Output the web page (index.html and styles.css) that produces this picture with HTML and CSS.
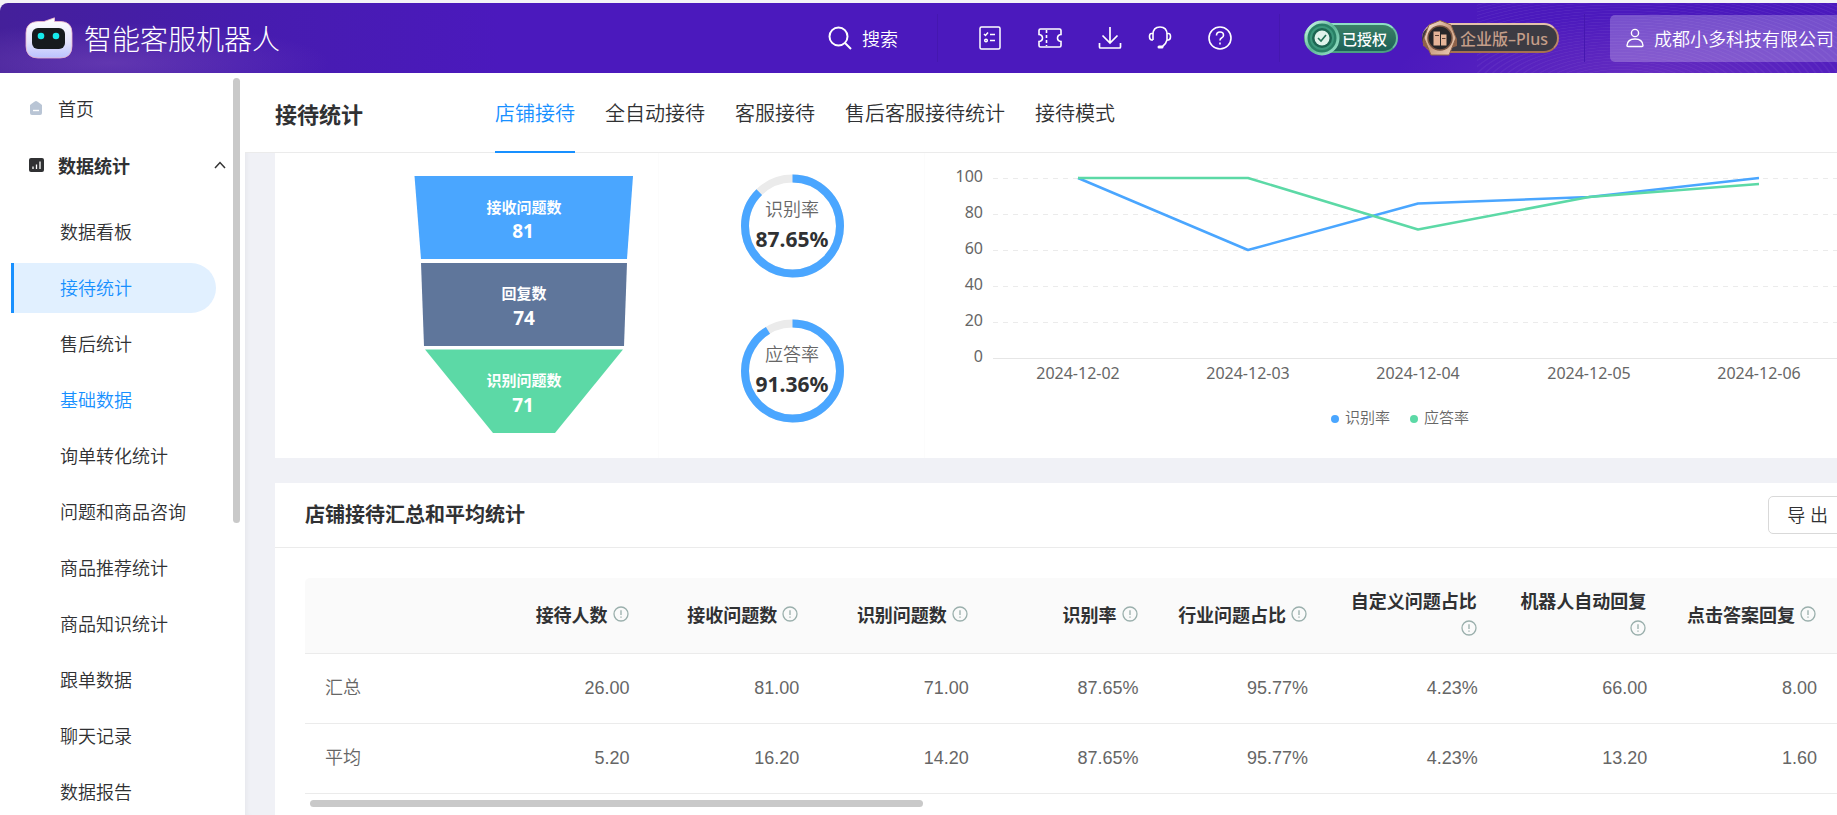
FILE: index.html
```html
<!DOCTYPE html>
<html lang="zh-CN">
<head>
  <meta charset="UTF-8">
  <title>接待统计 - 智能客服机器人</title>
  <meta name="viewport" content="width=device-width, initial-scale=1">
  <link rel="stylesheet" href="styles.css">
</head>
<body>
  <!-- shared icons -->
  <svg class="sprite" aria-hidden="true">
    <symbol id="info" viewBox="0 0 16 16">
      <circle cx="8" cy="8" r="7" fill="none" stroke="#9aafac" stroke-width="1.3"/>
      <path d="M8 4.2v4.9M8 10.6v1.2" stroke="#9aafac" stroke-width="1.3" fill="none"/>
    </symbol>
  </svg>

  <header class="topbar">
    <a class="brand" href="#">
      <svg width="48" height="42" viewBox="0 0 48 42" aria-hidden="true">
        <defs>
          <linearGradient id="face" x1="0" y1="0" x2="0" y2="1">
            <stop offset="0" stop-color="#fff"/>
            <stop offset="0.6" stop-color="#e4e3fb"/>
            <stop offset="1" stop-color="#b9c2ff"/>
          </linearGradient>
        </defs>
        <path d="M13 4.500H19L29.500 .8V4.500H36Q47 5 47 16V29Q47 41 35 41H13Q1 41 1 29V16Q1 5 13 4.500Z" fill="url(#face)" stroke="#eeb9cb" stroke-width=".8"/>
        <rect x="7" y="11" width="33" height="21" rx="6" fill="#171b1e"/>
        <circle cx="16" cy="19" r="3.300" fill="#16ecec"/>
        <circle cx="31" cy="19" r="3.300" fill="#16ecec"/>
      </svg>
      <span>智能客服机器人</span>
    </a>

    <button class="search" type="button">
      <svg width="24" height="24" viewBox="0 0 24 24" fill="none" stroke="#fff" stroke-width="2" aria-hidden="true">
        <circle cx="10.500" cy="10.500" r="9"/>
        <path d="M17 17l6 6"/>
      </svg>
      搜索
    </button>

    <nav class="tools">
      <button type="button" aria-label="任务">
        <svg width="24" height="24" viewBox="0 0 24 24" fill="none" stroke="#fff" stroke-width="1.500">
          <rect x="2" y="1" width="20" height="22" rx="1.500"/>
          <path d="M6 8l1.500 1.500L10 6.500M12 8.500h5M12 14.500h5"/>
          <circle cx="8" cy="14.500" r="1.300"/>
        </svg>
      </button>
      <button type="button" aria-label="卡券">
        <svg width="24" height="24" viewBox="0 0 24 24" fill="none" stroke="#fff" stroke-width="1.600">
          <path d="M2.500 3H21.500Q23 3 23 4.500V8.500Q19.500 9 19.500 12T23 15.500V19.500Q23 21 21.500 21H2.500Q1 21 1 19.500V15.500Q4.500 15 4.500 12T1 8.500V4.500Q1 3 2.500 3Z"/>
          <path d="M8.500 4v16" stroke-dasharray="3 2"/>
        </svg>
      </button>
      <button type="button" aria-label="下载">
        <svg width="24" height="24" viewBox="0 0 24 24" fill="none" stroke="#fff" stroke-width="1.700">
          <path d="M12 1v16M4.500 9.500L12 17l7.500-7.500M1.500 17v4q0 1 1 1h19q1 0 1-1v-4"/>
        </svg>
      </button>
      <button type="button" aria-label="客服">
        <svg width="24" height="24" viewBox="0 0 24 24" fill="none" stroke="#fff" stroke-width="1.600">
          <path d="M5 14V8.500Q5 1 12 1t7 7.500V14Q18 18 14.500 20.500"/>
          <path d="M5 7.500H3.500Q1.500 7.500 1.500 10.500T3.500 14H5M19 7.500h1.500q2 0 2 3T20.500 14H19"/>
          <path d="M11 21h3" stroke-width="3" stroke-linecap="round"/>
        </svg>
      </button>
      <button type="button" aria-label="帮助">
        <svg width="24" height="24" viewBox="0 0 24 24" fill="none" stroke="#fff" stroke-width="1.600">
          <circle cx="12" cy="12" r="11"/>
          <path d="M8.500 9.500Q8.500 6 12 6t3.500 3.200Q15.500 11 13.500 12 12 12.800 12 14.500M12 16.500v2"/>
        </svg>
      </button>
    </nav>

    <div class="badges">
      <span class="badge badge-auth">
        <svg class="medal" width="36" height="36" viewBox="0 0 36 36" aria-hidden="true">
          <defs>
            <linearGradient id="mint" x1="0" y1="0" x2="1" y2="1">
              <stop offset="0" stop-color="#d5ffee"/>
              <stop offset="0.5" stop-color="#5cb595"/>
              <stop offset="1" stop-color="#9be5cb"/>
            </linearGradient>
          </defs>
          <circle cx="18" cy="18" r="16" fill="#287f65" stroke="url(#mint)" stroke-width="3"/>
          <circle cx="18" cy="18" r="11" fill="#1c6552" stroke="#3c987c" stroke-width="2"/>
          <circle cx="18" cy="18" r="7.500" fill="#dff2eb"/>
          <path d="M14 18l3 3 5-6" fill="none" stroke="#227058" stroke-width="1.600"/>
        </svg>
        已授权
      </span>
      <span class="badge badge-plan">
        <svg class="medal" width="36" height="36" viewBox="0 0 36 36" aria-hidden="true">
          <defs>
            <linearGradient id="bronze" x1="0" y1="0" x2="1" y2="1">
              <stop offset="0" stop-color="#fff0e2"/>
              <stop offset="0.5" stop-color="#c99c7f"/>
              <stop offset="1" stop-color="#f0d3bd"/>
            </linearGradient>
          </defs>
          <path d="M10 29L1 26V19L4 14M26 29L35 26V19L32 14" fill="#8f6249"/>
          <path d="M18 0.500L29 5L34 18L27 35H9L2 18L7 5z" fill="url(#bronze)" stroke="#8f6249"/>
          <circle cx="18" cy="18" r="12" fill="#272629" stroke="#795442" stroke-width="1.500"/>
          <path d="M11.500 11.500h6.500v14h-6.500zM19 14.500h5.500v11H19z" fill="#e5b498"/>
          <path d="M13 15.500h4M20 18.500h3.500" stroke="#5d4034"/>
        </svg>
        企业版–Plus
      </span>
    </div>

    <button class="account" type="button">
      <svg width="18" height="20" viewBox="0 0 18 20" fill="none" stroke="#fff" stroke-width="1.400" aria-hidden="true">
        <circle cx="9" cy="5" r="3.600"/>
        <path d="M1 17.500Q1.500 11 9 11t8 6.500q0 1-1 1H2q-1 0-1-1z"/>
      </svg>
      成都小多科技有限公司
    </button>
  </header>

  <div class="layout">
    <aside class="sidebar">
      <a class="menu-top" href="#">
        <svg width="16" height="16" viewBox="0 0 16 16" aria-hidden="true">
          <path d="M8 1Q9 1 14 5v8q0 2-2 2H4q-2 0-2-2V5Q7 1 8 1z" fill="#b9c5d5"/>
          <path d="M5 10.500h6" stroke="#fff" stroke-width="1.400"/>
        </svg>
        首页
      </a>
      <a class="menu-top menu-open" href="#">
        <svg width="16" height="16" viewBox="0 0 16 16" aria-hidden="true">
          <rect x="1" y="1" width="15" height="14" rx="2" fill="#303133"/>
          <path d="M5 9.500V12M8.500 7.500V12M12 4.500V12" stroke="#fff" stroke-width="1.300"/>
        </svg>
        数据统计
        <svg class="arrow" width="12" height="8" viewBox="0 0 12 8" fill="none" stroke="#333" stroke-width="1.500" aria-hidden="true">
          <path d="M1 7l5-5.500L11 7"/>
        </svg>
      </a>
      <nav class="submenu">
        <a href="#">数据看板</a>
        <a class="active" href="#">接待统计</a>
        <a href="#">售后统计</a>
        <a class="hover" href="#">基础数据</a>
        <a href="#">询单转化统计</a>
        <a href="#">问题和商品咨询</a>
        <a href="#">商品推荐统计</a>
        <a href="#">商品知识统计</a>
        <a href="#">跟单数据</a>
        <a href="#">聊天记录</a>
        <a href="#">数据报告</a>
      </nav>
      <div class="side-scroll"></div>
    </aside>

    <main class="main">
      <div class="page-head">
        <h1>接待统计</h1>
        <nav class="tabs">
          <a class="active" href="#">店铺接待</a>
          <a href="#">全自动接待</a>
          <a href="#">客服接待</a>
          <a href="#">售后客服接待统计</a>
          <a href="#">接待模式</a>
        </nav>
      </div>

      <div class="content">
        <section class="card charts">
          <!-- funnel -->
          <svg class="panel" viewBox="0 0 384 305">
            <path d="M139.500 23H358L352 106H146z" fill="#4aa6ff"/>
            <path d="M146 110H352L349 193H149z" fill="#5f769b"/>
            <path d="M150 196.500H348L280 280H218z" fill="#5cd9a6"/>
            <g class="funnel-text">
              <text x="249" y="60">接收问题数</text>
              <text x="249" y="146">回复数</text>
              <text x="249" y="233">识别问题数</text>
            </g>
            <g class="funnel-num">
              <text x="248" y="85">81</text>
              <text x="249" y="172">74</text>
              <text x="248" y="259">71</text>
            </g>
          </svg>

          <!-- rates -->
          <svg class="panel" viewBox="0 0 266 305">
            <g fill="none" stroke-width="8">
              <circle cx="133.500" cy="73" r="47.500" stroke="#ebebeb"/>
              <circle cx="133.500" cy="73" r="47.500" stroke="#4aa6ff" pathLength="100" stroke-dasharray="87.65 100" transform="rotate(-90 133.500 73)"/>
              <circle cx="133.500" cy="218" r="47.500" stroke="#ebebeb"/>
              <circle cx="133.500" cy="218" r="47.500" stroke="#4aa6ff" pathLength="100" stroke-dasharray="91.36 100" transform="rotate(-90 133.500 218)"/>
            </g>
            <g class="ring-label">
              <text x="133" y="63">识别率</text>
              <text x="133" y="208">应答率</text>
            </g>
            <g class="ring-value">
              <text x="133" y="94">87.65%</text>
              <text x="133" y="239">91.36%</text>
            </g>
          </svg>

          <!-- trend -->
          <svg class="panel" viewBox="0 0 912 305">
            <path d="M68 25.500H912M68 61.500H912M68 97.500H912M68 133.500H912M68 169.500H912" stroke="#ebebeb" stroke-dasharray="5 5"/>
            <path d="M68 205.500H912" stroke="#e6e6e6"/>
            <g fill="none" stroke-width="2.500" stroke-linejoin="bevel">
              <path d="M153 25L323 97L493 50.500L664 44L834 25" stroke="#4aa6ff"/>
              <path d="M153 25H323L493 76.500L664 44L834 31" stroke="#5cd9a6"/>
            </g>
            <g class="axis-y">
              <text x="58" y="29">100</text>
              <text x="58" y="65">80</text>
              <text x="58" y="101">60</text>
              <text x="58" y="137">40</text>
              <text x="58" y="173">20</text>
              <text x="58" y="209">0</text>
            </g>
            <g class="axis-x">
              <text x="153" y="226">2024-12-02</text>
              <text x="323" y="226">2024-12-03</text>
              <text x="493" y="226">2024-12-04</text>
              <text x="664" y="226">2024-12-05</text>
              <text x="834" y="226">2024-12-06</text>
            </g>
            <circle cx="410" cy="266" r="4" fill="#4aa6ff"/>
            <circle cx="489" cy="266" r="4" fill="#5cd9a6"/>
            <g class="legend">
              <text x="420" y="270">识别率</text>
              <text x="499" y="270">应答率</text>
            </g>
          </svg>
        </section>

        <section class="card">
          <div class="card-head">
            <h2>店铺接待汇总和平均统计</h2>
            <button class="export" type="button">导 出</button>
          </div>
          <div class="table-wrap">
            <table>
              <thead>
                <tr>
                  <th></th>
                  <th>接待人数<svg class="info"><use href="#info"/></svg></th>
                  <th>接收问题数<svg class="info"><use href="#info"/></svg></th>
                  <th>识别问题数<svg class="info"><use href="#info"/></svg></th>
                  <th>识别率<svg class="info"><use href="#info"/></svg></th>
                  <th>行业问题占比<svg class="info"><use href="#info"/></svg></th>
                  <th>自定义问题占比<svg class="info"><use href="#info"/></svg></th>
                  <th>机器人自动回复<svg class="info"><use href="#info"/></svg></th>
                  <th>点击答案回复<svg class="info"><use href="#info"/></svg></th>
                </tr>
              </thead>
              <tbody>
                <tr>
                  <td>汇总</td>
                  <td>26.00</td>
                  <td>81.00</td>
                  <td>71.00</td>
                  <td>87.65%</td>
                  <td>95.77%</td>
                  <td>4.23%</td>
                  <td>66.00</td>
                  <td>8.00</td>
                </tr>
                <tr>
                  <td>平均</td>
                  <td>5.20</td>
                  <td>16.20</td>
                  <td>14.20</td>
                  <td>87.65%</td>
                  <td>95.77%</td>
                  <td>4.23%</td>
                  <td>13.20</td>
                  <td>1.60</td>
                </tr>
              </tbody>
            </table>
            <div class="table-scroll"></div>
          </div>
        </section>
      </div>
    </main>
  </div>
</body>
</html>
```
FILE: styles.css
```css
* {
  box-sizing: border-box;
}
body {
  margin: 0;
  height: 100vh;
  padding-top: 3px;
  display: flex;
  flex-direction: column;
  overflow: hidden;
  background: #f3f2f6;
  color: #303133;
  font-family: "Noto Sans", "Noto Sans CJK SC", sans-serif;
  font-size: 18px;
  font-weight: 350;
}
a {
  color: inherit;
  text-decoration: none;
}
button {
  border: none;
  background: none;
  padding: 0;
  color: inherit;
  font: inherit;
  white-space: nowrap;
  cursor: pointer;
}
h1, h2 {
  margin: 0;
}
svg {
  flex: none;
}
.sprite {
  display: none;
}

/* top bar */
.topbar {
  flex: none;
  height: 70px;
  display: flex;
  align-items: center;
  padding-left: 25px;
  border-top-left-radius: 8px;
  color: #fff;
  background:
    radial-gradient(ellipse 220px 40px at 110px 60px, rgba(150, 100, 200, 0.35), transparent),
    radial-gradient(ellipse 260px 60px at calc(100% - 180px) 70px, rgba(150, 80, 200, 0.35), transparent),
    repeating-radial-gradient(ellipse 400px 160px at 40% 130%, transparent 0 4px, rgba(255, 255, 255, 0.05) 5px 6px, transparent 7px) right / 360px 100% no-repeat,
    linear-gradient(90deg, #44209a, #461cae 240px, #4b19bd 500px);
}
.brand {
  display: flex;
  align-items: center;
  gap: 11px;
  font-size: 28px;
  font-weight: 300;
}
.search {
  display: flex;
  align-items: center;
  gap: 10px;
  margin-left: auto;
  padding-right: 39px;
}
.tools {
  display: flex;
  align-items: center;
  gap: 36px;
  height: 48px;
  padding: 0 47px 0 40px;
  border: 1px solid #4517b0;
  border-width: 0 1px;
}
.tools svg {
  display: block;
}
.tools button:nth-child(4) {
  margin: 0 0 0 -10px;
}
.badges {
  display: flex;
  align-items: center;
  gap: 24px;
  height: 48px;
  padding: 0 25px 0 24px;
  border-right: 1px solid #4517b0;
}
.badge {
  display: flex;
  align-items: center;
  gap: 2px;
  height: 30px;
  padding-right: 9px;
  border: 2px solid;
  border-left: none;
  border-radius: 15px;
  font-size: 15px;
  font-weight: 500;
  white-space: nowrap;
}
.badge-auth {
  background: linear-gradient(#3b8067, #1d6157);
  border-color: #8edfc4 #69bda0 #4b9d80;
}
.badge-plan {
  background: #3c3b43;
  border-color: #e5c2ab #b98669 #a6704f;
  color: #c49e89;
  font-size: 16px;
}
.account {
  display: flex;
  align-items: center;
  gap: 10px;
  height: 47px;
  margin-left: 25px;
  padding: 0 3px 0 16px;
  border-radius: 5px 0 0 5px;
  background: rgba(255, 255, 255, 0.24);
}

/* layout */
.layout {
  flex: 1;
  min-height: 0;
  display: flex;
}
.sidebar {
  position: relative;
  flex: none;
  width: 245px;
  padding-top: 11px;
  background: #fff;
  overflow: hidden;
}
.menu-top {
  display: flex;
  align-items: center;
  gap: 14px;
  height: 48px;
  margin-bottom: 9px;
  padding: 0 19px 0 28px;
}
.menu-open {
  font-weight: 700;
}
.menu-open .arrow {
  margin-left: auto;
}
.submenu {
  display: flex;
  flex-direction: column;
  gap: 6px;
  margin: 0 29px 0 11px;
  padding-top: 9px;
}
.submenu a {
  height: 50px;
  padding-left: 46px;
  border-left: 3px solid transparent;
  line-height: 50px;
}
.submenu .active {
  background: #e1f0ff;
  border-left-color: #1890ff;
  border-radius: 0 25px 25px 0;
}
.submenu .active,
.submenu .hover {
  color: #1890ff;
}
.side-scroll {
  position: absolute;
  top: 5px;
  right: 5px;
  width: 7px;
  height: 60%;
  border-radius: 4px;
  background: #c9c9c9;
}
.main {
  flex: 1;
  min-width: 0;
  background: #f0f1f6;
  box-shadow: inset 5px 0 5px -3px rgba(0, 0, 0, 0.04);
}
.page-head {
  display: flex;
  height: 80px;
  padding-left: 30px;
  background: #fff;
  border-bottom: 1px solid #ebebeb;
}
.page-head h1 {
  font-size: 22px;
  line-height: 82px;
}
.tabs {
  display: flex;
  gap: 30px;
  margin-left: 132px;
  font-size: 20px;
  line-height: 82px;
}
.tabs a {
  height: 80px;
}
.tabs .active {
  color: #1890ff;
  border-bottom: 2px solid #1890ff;
}
.content {
  padding-left: 30px;
}
.card {
  margin-bottom: 25px;
  background: #fff;
}

/* charts */
.charts {
  display: grid;
  grid-template-columns: 384fr 266fr 912fr;
}
.panel {
  display: block;
  width: 100%;
}
.panel + .panel {
  box-shadow: -1px 0 #fcfcfc;
}
.funnel-text,
.funnel-num {
  fill: #fff;
  font-size: 15px;
  font-weight: 700;
  text-anchor: middle;
}
.funnel-num {
  font-size: 19px;
}
.ring-label {
  fill: #666;
  font-size: 18px;
  text-anchor: middle;
}
.ring-value {
  fill: #303133;
  font-size: 21px;
  font-weight: 700;
  text-anchor: middle;
}
.axis-y,
.axis-x,
.legend {
  fill: #666;
  font-size: 15px;
}
.axis-x {
  font-size: 16px;
  font-weight: 400;
  text-anchor: middle;
}
.axis-y {
  font-size: 16px;
  font-weight: 400;
  text-anchor: end;
}

/* summary table */
.card-head {
  display: flex;
  align-items: center;
  justify-content: space-between;
  height: 65px;
  padding-left: 30px;
  border-bottom: 1px solid #ebebeb;
}
.card-head h2 {
  font-size: 20px;
  line-height: 24px;
}
.export {
  height: 38px;
  margin-right: -10px;
  padding: 0 18px;
  border: 1px solid #d9d9d9;
  border-radius: 5px;
  background: #fff;
  line-height: 34px;
}
.table-wrap {
  padding: 30px 0 30px 30px;
}
table {
  width: 100%;
  table-layout: fixed;
  border-collapse: separate;
  border-spacing: 0;
  font-family: "Liberation Sans", "Noto Sans CJK SC", sans-serif;
}
th, td {
  height: 70px;
  padding: 0 20px 2px;
  border-bottom: 1px solid #ebebeb;
  text-align: right;
  color: #666;
  line-height: 28px;
}
th {
  height: 76px;
  padding: 9px 21px 9px 10px;
  background: #fafafa;
  color: #303133;
}
th:first-child {
  width: 175px;
  border-top-left-radius: 5px;
}
td:first-child {
  text-align: left;
}
.info {
  width: 16px;
  height: 16px;
  margin-left: 5px;
}
.table-scroll {
  width: 40%;
  height: 7px;
  margin: 6px 0 0 5px;
  border-radius: 4px;
  background: #c9c9c9;
}
```
